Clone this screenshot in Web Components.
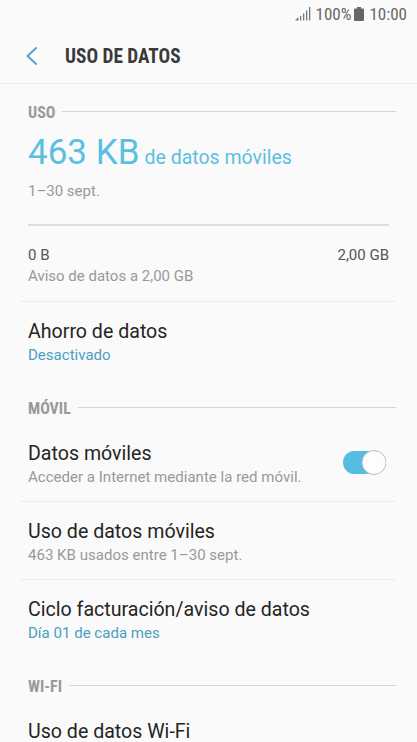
<!DOCTYPE html>
<html lang="es"><head><meta charset="utf-8"><title>Uso de datos</title>
<style>html,body{margin:0;height:742px;overflow:hidden;background:#fafafa}</style></head><body>
<data-usage-screen></data-usage-screen>
<script>
const define=(name,html)=>customElements.define(name,class extends HTMLElement{constructor(){super();this.attachShadow({mode:'open'}).innerHTML=html}});
define('status-bar',`<style>:host{display:flex;height:28px;box-sizing:border-box;padding:0 10px 0 0;justify-content:flex-end;align-items:center;font:17px/28px "Roboto Condensed",Roboto,sans-serif;color:#666}svg{display:block}.sig{margin-right:5px}.bat{margin:0 5px 0 3px}</style>
<svg class="sig" width="16" height="14" viewBox="0 0 16 14" fill="#777"><path d="M0 13.500L3.500 10v3.500zM5 9h1.300v4.500H5zM8 6.500h1.300v7H8zM11 3.500h1.300v10H11zM14 0h1.300v13.500H14z"/></svg><span>100%</span><svg class="bat" width="10" height="14" viewBox="0 0 10 14" fill="#666"><path d="M3 0h4v1.500h2q1 0 1 1V13q0 1-1 1H1q-1 0-1-1V2.500q0-1 1-1h2z"/></svg><span>10:00</span>`);
define('app-bar',`<style>:host{display:flex;height:56px;box-sizing:border-box;border-bottom:1px solid #eaeaea;align-items:center;padding-left:25px;color:#3a3a3a;font:700 19.300px/24px "Roboto Condensed",Roboto,sans-serif}svg{margin-right:26px}slot{display:block}span{padding-top:2px}</style><svg width="14" height="20" viewBox="0 0 14 20" fill="none" stroke="#4ba3c7" stroke-width="1.800"><path d="M11.600 1.500L2.500 10l9.100 8.500"/></svg><span><slot></slot></span>`);
define('section-title',`<style>:host{display:flex;align-items:center;gap:7px;height:20px;padding:0 21px 6px 28px;color:#999;font:700 16px/20px "Roboto Condensed",Roboto,sans-serif}:host([tight]){padding-bottom:0}span{margin-top:2px}i{height:1px;background:#d4d4d4;flex:1;margin-bottom:2px}</style><span><slot></slot></span><i></i>`);
define('setting-row',`<style>:host{display:flex;box-sizing:border-box;height:78px;margin:0 21px;padding:18px 10px 0 7px;justify-content:space-between;white-space:nowrap}:host([last]){height:96px}.t{font-size:19.600px;line-height:24px;color:#252525}.s{font-size:15.050px;line-height:22px;color:#999}:host([accent]) .s{color:#4a9fc2}:host([line]){border-bottom:1px solid #ebebeb}</style><div><div class="t"><slot></slot></div><div class="s"><slot name="sub"></slot></div></div><slot name="control"></slot>`);
define('toggle-switch',`<style>:host{display:block;margin-top:6px}svg{display:block}</style><svg width="44" height="28" viewBox="0 0 44 28"><rect x="1" y="3" width="42" height="23" rx="11.500" fill="#54bde2"/><circle cx="32" cy="14.500" r="12" fill="#fdfdfd" stroke="#bcbcbc"/></svg>`);
define('usage-summary',`<style>:host{display:block;box-sizing:border-box;height:180px;margin:0 21px;padding:0 7px;border-bottom:1px solid #ebebeb}.b{display:flex;align-items:baseline;color:#5bbfe1;height:59px;line-height:60px;padding-top:1px}.n{font-size:35px;margin-right:5px}.l{font-size:19.500px}.d{color:#999;font-size:15px;line-height:18px}.rule{height:2px;background:#e2dcdc;margin:24px 0 20px}.r{display:flex;justify-content:space-between;font-size:15px;line-height:18px;color:#555;margin-bottom:3px}</style><div class="b"><span class="n">463 KB</span><span class="l">de datos móviles</span></div><div class="d">1–30 sept.</div><div class="rule"></div><div class="r"><span>0 B</span><span>2,00 GB</span></div><div class="d">Aviso de datos a 2,00 GB</div>`);
define('data-usage-screen',`<style>:host{display:block;width:417px;height:742px;overflow:hidden;font-family:Roboto,sans-serif}app-bar{margin-bottom:18px}</style><status-bar></status-bar><app-bar>USO DE DATOS</app-bar><section-title tight>USO</section-title><usage-summary></usage-summary><setting-row accent last>Ahorro de datos<span slot="sub">Desactivado</span></setting-row><section-title>MÓVIL</section-title><setting-row line>Datos móviles<span slot="sub">Acceder a Internet mediante la red móvil.</span><toggle-switch slot="control"></toggle-switch></setting-row><setting-row line>Uso de datos móviles<span slot="sub">463 KB usados entre 1–30 sept.</span></setting-row><setting-row accent last>Ciclo facturación/aviso de datos<span slot="sub">Día 01 de cada mes</span></setting-row><section-title>WI-FI</section-title><setting-row>Uso de datos Wi-Fi</setting-row>`);
</script></body></html>
